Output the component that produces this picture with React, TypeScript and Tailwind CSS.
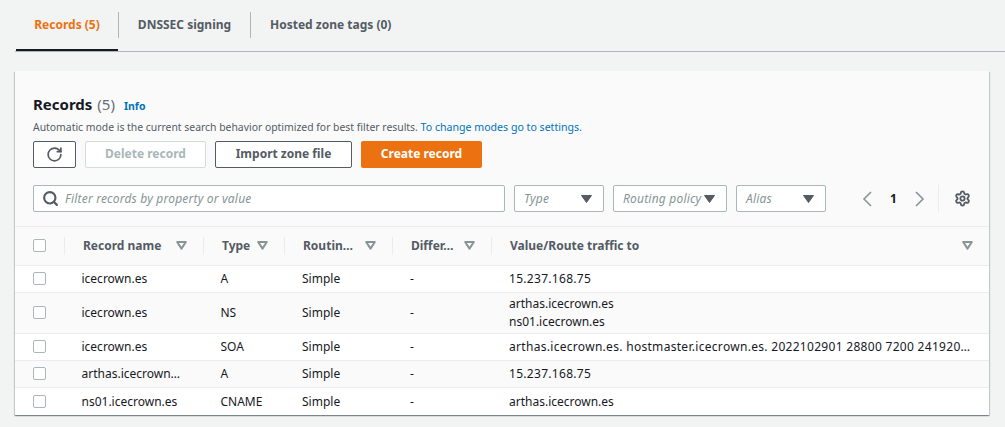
import { RotateCw, Search, Settings } from "lucide-react";
import React from "react";

const FONT = "[font-family:'Noto_Sans',sans-serif]";

type Row = {
  name: string;
  type: string;
  value: string[];
  height: string;
  shaded: boolean;
};

const rows: Row[] = [
  { name: "icecrown.es", type: "A", value: ["15.237.168.75"], height: "h-[27px]", shaded: false },
  { name: "icecrown.es", type: "NS", value: ["arthas.icecrown.es", "ns01.icecrown.es"], height: "h-[41px]", shaded: true },
  {
    name: "icecrown.es",
    type: "SOA",
    value: ["arthas.icecrown.es. hostmaster.icecrown.es. 2022102901 28800 7200 241920…"],
    height: "h-[27px]",
    shaded: false,
  },
  { name: "arthas.icecrown…", type: "A", value: ["15.237.168.75"], height: "h-[27px]", shaded: true },
  { name: "ns01.icecrown.es", type: "CNAME", value: ["arthas.icecrown.es"], height: "h-[27px]", shaded: false },
];

const Caret = () => (
  <svg width="11" height="9" viewBox="0 0 11 9" className="shrink-0">
    <path d="M1.2 1h8.6L5.5 7.6z" fill="none" stroke="#879596" strokeWidth="2" strokeLinejoin="round" />
  </svg>
);

const SolidCaret = () => (
  <svg width="11" height="8" viewBox="0 0 11 8" className="shrink-0">
    <path d="M0.5 0.5h10L5.5 7.5z" fill="#545b64" stroke="#545b64" strokeLinejoin="round" />
  </svg>
);

const Chevron = ({ flip }: { flip?: boolean }) => (
  <svg width="10" height="16" viewBox="0 0 10 16" className={flip ? "rotate-180" : ""}>
    <path d="M9 1 2 8l7 7" fill="none" stroke="#879596" strokeWidth="1.6" />
  </svg>
);

const Checkbox = () => (
  <div className="w-[13px] h-[13px] -mt-px rounded-[2px] border border-[#aab7b8] bg-white" />
);

const HeadCell = ({ label, width }: { label: string; width: string }) => (
  <div className={`${width} h-full flex items-center relative pl-[19px]`}>
    <div className="absolute left-0 top-[10px] bottom-[10px] w-px bg-[#eaeded]" />
    <span className="text-[12px] font-bold text-[#545b64] whitespace-nowrap">{label}</span>
  </div>
);

const Select = ({ label, width }: { label: string; width: string }) => (
  <div className={`${width} h-[27px] flex items-center justify-between pl-[9px] pr-[11px] bg-white border border-[#aab7b8] rounded-[2px]`}>
    <span className="text-[12px] italic tracking-[0.2px] text-[#879596] whitespace-nowrap">{label}</span>
    <SolidCaret />
  </div>
);

// sort carets sit over the header row
const HeadCarets = () => (
  <div className="relative h-0">
    <div className="absolute left-[161px] top-[-25px]"><Caret /></div>
    <div className="absolute left-[242px] top-[-25px]"><Caret /></div>
    <div className="absolute left-[350px] top-[-25px]"><Caret /></div>
    <div className="absolute left-[449px] top-[-25px]"><Caret /></div>
    <div className="absolute left-[947px] top-[-25px]"><Caret /></div>
  </div>
);

export default function App() {
  return (
    <div className={`${FONT} w-[1005px] h-[427px] overflow-hidden bg-[#f2f3f3] pt-[12px] px-[15px] text-[#16191f]`}>
      <div className="w-[990px] h-[40px] flex items-start border-b border-[#aab7b8]">
        <div className="w-[102px] ml-px h-[39px] border-b-2 border-[#16191f] flex">
          <div className="w-full h-[26px] flex items-center justify-center text-[12px] font-bold text-[#ec7211]">Records (5)</div>
        </div>
        <div className="w-[132px] h-[26px] border-l border-[#aab7b8] flex items-center justify-center text-[12px] font-bold text-[#545b64]">DNSSEC signing</div>
        <div className="h-[26px] border-l border-[#aab7b8] pl-[19px] flex items-center text-[12px] font-bold text-[#545b64]">Hosted zone tags (0)</div>
      </div>

      <div className="mt-[19px] w-[974px] h-[344px] bg-[#fafafa] shadow-[0_1px_1px_0_rgba(0,28,36,0.3),1px_1px_1px_0_rgba(0,28,36,0.15),-1px_1px_1px_0_rgba(0,28,36,0.15)]">
        <div className="h-[156px] px-[18px] pt-[23px] border-b border-[#eaeded]">
          <div className="flex items-baseline h-[21px]">
            <span className="text-[15px] font-bold leading-[21px]">Records</span>
            <span className="text-[15px] text-[#687078] leading-[21px] ml-[5px]">(5)</span>
            <span className="text-[10.5px] font-bold text-[#0073bb] ml-[9px]">Info</span>
          </div>
          <p className="text-[10.4px] leading-[14px] mt-[5px] text-[#545b64] whitespace-nowrap">
            Automatic mode is the current search behavior optimized for best filter results.{" "}
            <span className="text-[10.6px] text-[#0073bb]">To change modes go to settings.</span>
          </p>
          <div className="flex gap-[9px] mt-[7px]">
            <div className="w-[43px] h-[27px] flex items-center justify-center bg-white border border-[#545b64] rounded-[2px]">
              <RotateCw size={17} strokeWidth={2.4} color="#545b64" />
            </div>
            <div className="w-[121px] h-[27px] pb-px flex items-center justify-center bg-white border border-[#d5dbdb] rounded-[2px] text-[12px] font-bold text-[#aab7b8]">Delete record</div>
            <div className="w-[137px] h-[27px] pb-px flex items-center justify-center bg-white border border-[#545b64] rounded-[2px] text-[12px] font-bold text-[#545b64]">Import zone file</div>
            <div className="w-[121px] h-[27px] pb-px flex items-center justify-center bg-[#ec7211] rounded-[2px] text-[12px] font-bold text-white">Create record</div>
          </div>
          <div className="flex items-center mt-[17px]">
            <div className="w-[472px] h-[27px] flex items-center pl-[8px] bg-white border border-[#aab7b8] rounded-[2px]">
              <Search size={17} strokeWidth={3} color="#545b64" />
              <span className="text-[12px] italic tracking-[0.2px] text-[#879596] ml-[6px] whitespace-nowrap">Filter records by property or value</span>
            </div>
            <div className="flex gap-[9px] ml-[9px]">
              <Select label="Type" width="w-[90px]" />
              <Select label="Routing policy" width="w-[114px]" />
              <Select label="Alias" width="w-[90px]" />
            </div>
            <div className="flex items-center ml-[36px]">
              <Chevron />
              <span className="text-[12px] font-bold w-[43px] text-center">1</span>
              <Chevron flip />
              <div className="w-px h-[27px] bg-[#eaeded] ml-[13px]" />
              <Settings size={17} strokeWidth={2.6} color="#545b64" className="ml-[15px]" />
            </div>
          </div>
        </div>

        <div className="h-[39px] flex items-center border-b border-[#eaeded]">
          <div className="w-[49px] pl-[18px]"><Checkbox /></div>
          <HeadCell label="Record name" width="w-[139px]" />
          <HeadCell label="Type" width="w-[81px]" />
          <HeadCell label="Routin…" width="w-[108px]" />
          <HeadCell label="Differ…" width="w-[99px]" />
          <HeadCell label="Value/Route traffic to" width="w-[498px]" />
        </div>
        <HeadCarets />

        {rows.map((r, i) => (
          <div
            key={i}
            className={`${r.height} flex items-center text-[12px] leading-[18px] text-[#16191f] ${r.shaded ? "bg-[#fafafa]" : "bg-white"} ${i < rows.length - 1 ? "border-b border-[#eaeded]" : ""}`}
          >
            <div className="w-[49px] pl-[18px]"><Checkbox /></div>
            <div className="w-[139px] pl-[17.5px] whitespace-nowrap">{r.name}</div>
            <div className="w-[81px] pl-[17.5px]">{r.type}</div>
            <div className="w-[108px] pl-[18px]">Simple</div>
            <div className="w-[99px] pl-[18px]">-</div>
            <div className="w-[498px] pl-[18px] whitespace-nowrap">
              {r.value.map((v) => (
                <div key={v} className={/^\d|\d{5}/.test(v) ? "tracking-[0.3px]" : ""}>{v}</div>
              ))}
            </div>
          </div>
        ))}
      </div>
    </div>
  );
}
